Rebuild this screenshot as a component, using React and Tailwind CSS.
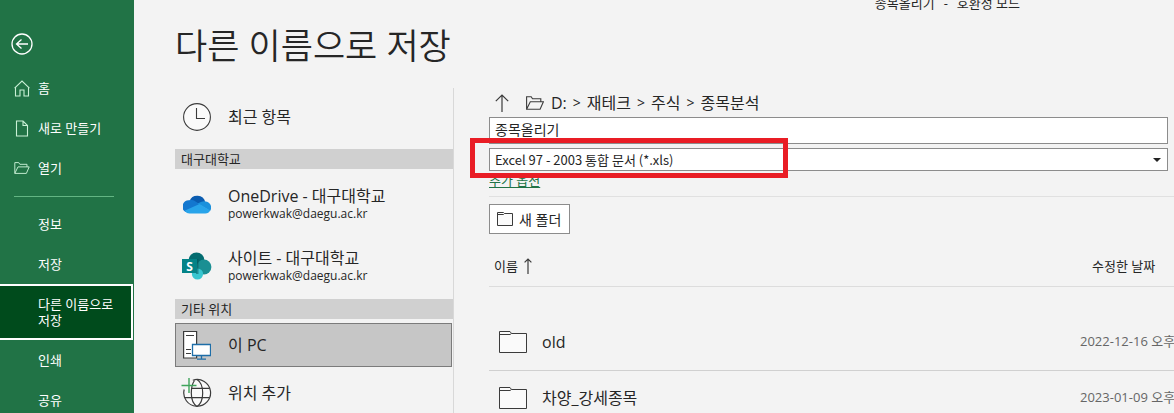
import React from "react";

const BackIcon = () => (
  <svg width="22" height="22" viewBox="0 0 22 22" fill="none" stroke="#fff" strokeWidth="1.3">
    <circle cx="11" cy="11" r="10" />
    <path d="M17 11H5.500M10.500 6.500l-5 4.500 5 4.500" />
  </svg>
);

const HomeIcon = () => (
  <svg width="16" height="17" viewBox="0 0 16 17" fill="none" stroke="#c9f0d6" strokeWidth="1.1">
    <path d="M.6 8.2 8 1l7.400 7.200M1.500 7.500v8.500h4.500v-6h4v6h4.500V7.500" />
  </svg>
);

const NewIcon = () => (
  <svg width="16" height="17" viewBox="0 0 16 17" fill="none" stroke="#c9f0d6" strokeWidth="1.1">
    <path d="M2.500 1h6.500l4.500 4.500V16h-11zM9 1v4.500h4.500" />
  </svg>
);

const OpenIcon = ({ className, width = 16, height = 12 }) => (
  <svg className={className} width={width} height={height} viewBox="0 0 18 14" fill="none" stroke="currentColor" strokeWidth="1.1">
    <path d="M.6 13.300V.7h4.600l1.300 2h8.300v3M.6 13.300l3.700-7.600h13.100l-3.300 7.600z" />
  </svg>
);

const ClockIcon = () => (
  <svg width="28" height="28" viewBox="0 0 28 28" fill="#fafafa" stroke="#3b3b3b" strokeWidth="1.1">
    <circle cx="14" cy="14" r="13.400" />
    <path d="M13.500 5v10.500H22" fill="none" />
  </svg>
);

const OneDriveIcon = () => (
  <svg width="28" height="20" viewBox="0 0 28 20">
    <path d="M6.500 7A8.300 8.300 0 0 1 22.300 8L15 14z" fill="#0a5cb0" />
    <path d="M6.500 6.200c2.300-.3 4.300.2 6 1.300l6 3.700L2.500 18A6.400 6.400 0 0 1 6.500 6.200z" fill="#1377cf" />
    <path d="M14.500 9.500 18.500 7.800c1.200-.5 2.600-.7 3.900-.4A6.100 6.100 0 0 1 27 17z" fill="#1a90dc" />
    <path d="M1.500 16.700 16.500 10l10.700 6.500A5.500 5.500 0 0 1 22 19.500H6.500a6.500 6.500 0 0 1-5-2.800z" fill="#28a4ea" />
  </svg>
);

const SharePointIcon = () => (
  <svg className="-ml-px" width="30" height="28" viewBox="0 0 30 28">
    <circle cx="14.500" cy="8.500" r="8" fill="#036c70" />
    <circle cx="22" cy="15" r="7.400" fill="#1a8f93" />
    <circle cx="15.500" cy="22" r="5.600" fill="#37c6d0" />
    <path d="M14 7h2.500v15H14z" fill="#035055" opacity=".5" />
    <rect y="7" width="15" height="14" fill="#038387" />
    <text x="7.500" y="18.500" textAnchor="middle" fontSize="12" fontWeight="700" fill="#fff">S</text>
  </svg>
);

const PcIcon = () => (
  <svg width="28" height="30" viewBox="0 0 28 30" fill="#fff">
    <path d="M.6 1.500h13V28H.6z" stroke="#3b3b3b" strokeWidth="1.200" />
    <path d="M3 5.500h8M3 19.500h5M3 23.500h5" stroke="#3b3b3b" strokeWidth="1.200" />
    <path d="M9.500 14.500h18v11h-18z" stroke="#1e6ea8" strokeWidth="1.300" />
    <path d="M18.500 25.500v3.500M14 29.200h9" stroke="#1e6ea8" strokeWidth="1.300" />
  </svg>
);

const AddPlaceIcon = () => (
  <svg className="-ml-0.5" width="31" height="30" viewBox="0 0 31 30" fill="none" stroke="#3b3b3b" strokeWidth="1.200">
    <path d="M11.800 2.200A13.400 13.400 0 1 1 3.200 11.500L8 9z" fill="#fafafa" stroke="none" />
    <path d="M11.800 2.200A13.400 13.400 0 1 1 3.200 11.500" />
    <path d="M13.500 2.500C11.300 5.500 10.300 10 10.300 15c0 5.500 1.800 11 5.700 13.400 3.900-2.400 5.700-7.900 5.700-13.400S19.900 4 16 1.600M11 10.300h17.500M3.500 19.700h25" />
    <path d="M8 0v15M.5 7.500h15" stroke="#3fa45b" strokeWidth="1.400" />
  </svg>
);

const UpArrow = ({ width, height }) => (
  <svg width={width} height={height} viewBox="0 0 14 18" fill="none" stroke="#3b3b3b" strokeWidth="1.200">
    <path d="M7 18V1M.8 7.200 7 1l6.200 6.200" />
  </svg>
);

const SortArrow = () => (
  <svg width="8" height="16" viewBox="0 0 8 16" fill="none" stroke="#3b3b3b" strokeWidth="1.200">
    <path d="M4 16V1M.6 4.400 4 1l3.400 3.400" />
  </svg>
);

const FolderIcon = () => (
  <svg width="28" height="22" viewBox="0 0 28 22" fill="#fafafa" stroke="#3b3b3b">
    <path d="M.5 .5h10.500l1.500 2h15v19H.5z" />
    <path d="M.5 3.500h10.500l1.500-1" />
  </svg>
);

const SmallFolderIcon = () => (
  <svg width="16" height="14" viewBox="0 0 16 14" fill="#fafafa" stroke="#3b3b3b">
    <path d="M.5 .5h6l1 1h8v12H.5z" />
    <path d="M.5 2.500h6l1-1" />
  </svg>
);

const topNav = [
  { label: "홈", icon: <HomeIcon /> },
  { label: "새로 만들기", icon: <NewIcon /> },
  { label: "열기", icon: <OpenIcon className="text-[#c9f0d6]" /> },
];

const fileNav = [
  { label: "정보" },
  { label: "저장" },
  { label: "다른 이름으로 저장", selected: true },
  { label: "인쇄" },
  { label: "공유" },
];

const crumbs = ["D:", "재테크", "주식", "종목분석"];

const folders = [
  { name: "old", date: "2022-12-16 오후" },
  { name: "차양_강세종목", date: "2023-01-09 오후" },
];

function Sidebar() {
  return (
    <nav className="w-[134px] shrink-0 bg-[#217346] pt-[33px] text-[13px] leading-4 text-white">
      <button aria-label="뒤로" className="mb-[13px] ml-[11px] block">
        <BackIcon />
      </button>
      {topNav.map((item) => (
        <button key={item.label} className="flex h-10 w-full items-center gap-2 pl-3.5 text-left">
          {item.icon}
          {item.label}
        </button>
      ))}
      <hr className="mt-2 mr-5 mb-[7px] ml-3.5 h-px border-0 bg-[#63b583]" />
      {fileNav.map((item) =>
        item.selected ? (
          <button key={item.label} aria-current="page" className="block h-14 w-[133px] border-2 border-l-0 border-white bg-[#004b1c] pr-4 pl-[38px] text-left break-keep">
            {item.label}
          </button>
        ) : (
          <button key={item.label} className="block h-10 w-full pl-[38px] text-left">
            {item.label}
          </button>
        )
      )}
    </nav>
  );
}

function Place({ icon, title, detail, className }) {
  return (
    <button className={"flex w-full items-center text-left " + className}>
      <span className="flex w-[45px] shrink-0 items-center">{icon}</span>
      <span>
        <span className="block text-base leading-5">{title}</span>
        {detail && <span className="block text-[12px] leading-4">{detail}</span>}
      </span>
    </button>
  );
}

function Places() {
  return (
    <section className="w-[279px] shrink-0 border-r border-[#d8d8d8]">
      <Place className="h-[57px] pl-2" icon={<ClockIcon />} title="최근 항목" />
      <h2 className="mt-1 h-5 bg-[#d0d0d0] pl-1.5 text-[13px] leading-5">대구대학교</h2>
      <Place className="mt-1 h-[62px] pl-2" icon={<OneDriveIcon />} title="OneDrive - 대구대학교" detail="powerkwak@daegu.ac.kr" />
      <Place className="h-[62px] pl-2" icon={<SharePointIcon />} title="사이트 - 대구대학교" detail="powerkwak@daegu.ac.kr" />
      <h2 className="mt-0.5 h-5 bg-[#d0d0d0] pl-1.5 text-[13px] leading-5">기타 위치</h2>
      <div className="mt-1 pr-px">
        <Place className="h-11 border border-[#7b7b7b] bg-[#c6c6c6] pl-[7px]" icon={<PcIcon />} title="이 PC" />
      </div>
      <Place className="mt-1 h-11 pl-2" icon={<AddPlaceIcon />} title="위치 추가" />
    </section>
  );
}

function SaveForm() {
  return (
    <section className="min-w-0 flex-1 pl-[35px]">
      <div className="flex h-[29px] items-center text-base leading-5">
        <button aria-label="상위 폴더" className="mr-[17px] ml-1.5">
          <UpArrow width={14} height={18} />
        </button>
        <OpenIcon className="mr-[7px] text-[#3b3b3b]" width={18} height={14} />
        <div className="flex gap-1.5">
          {crumbs.map((crumb, i) => (
            <React.Fragment key={crumb}>
              {i > 0 && <span className="text-[14px]">&gt;</span>}
              <span>{crumb}</span>
            </React.Fragment>
          ))}
        </div>
      </div>
      <div className="relative mr-[6px]">
        <input aria-label="파일 이름" defaultValue="종목올리기" className="block h-[27px] w-full border border-[#8c8c8c] bg-white px-[5px] pb-[3px] text-[14px] outline-none" />
        <div className="relative mt-1">
          <select aria-label="파일 형식" className="block h-[23px] w-full appearance-none border border-[#8c8c8c] bg-white px-[5px] font-['Noto_Sans_CJK_KR',sans-serif] text-[13px] outline-none">
            <option>Excel 97 - 2003 통합 문서 (*.xls)</option>
          </select>
          <svg className="pointer-events-none absolute top-[10px] right-[7px]" width="8" height="4" viewBox="0 0 8 4">
            <path d="M0 0h8L4 4z" fill="#222" />
          </svg>
        </div>
        <div className="pointer-events-none absolute top-[21px] left-[-19px] h-[40px] w-[318px] border-5 border-[#e91d25]" />
      </div>
      <a href="#options" className="mt-px block w-fit text-[13px] leading-4 text-[#217346] underline underline-offset-2">
        추가 옵션
      </a>
      <hr className="mt-2 border-[#e0e0e0]" />
      <button className="mt-[7px] flex h-[30px] items-center gap-1.5 border border-[#8c8c8c] bg-white px-[7px] pr-2 text-[14px]">
        <SmallFolderIcon />새 폴더
      </button>
      <table className="mt-[13px] w-full table-fixed border-collapse">
        <thead>
          <tr className="h-[39px] border-b border-[#dcdcdc] text-[13px] leading-4">
            <th className="pl-[5px] text-left font-normal">
              <button className="flex items-center gap-1.5">
                이름 <SortArrow />
              </button>
            </th>
            <th className="w-[94px] pl-3 text-left font-normal whitespace-nowrap">수정한 날짜</th>
          </tr>
        </thead>
        <tbody>
          <tr className="h-7" aria-hidden="true">
            <td colSpan={2} />
          </tr>
          {folders.map((f) => (
            <tr key={f.name} className="h-14 border-b border-[#d0d0d0]">
              <td className="pl-2.5">
                <div className="flex items-center gap-[15px] text-base leading-5">
                  <FolderIcon />
                  {f.name}
                </div>
              </td>
              <td className="text-[13px] whitespace-nowrap text-[#666]">{f.date}</td>
            </tr>
          ))}
        </tbody>
      </table>
    </section>
  );
}

export default function App() {
  return (
    <div className="flex h-screen overflow-hidden bg-[#f3f3f3] font-['Open_Sans','Noto_Sans_CJK_KR',sans-serif] text-[#262626]">
      <Sidebar />
      <main className="flex min-w-0 flex-1 flex-col pl-[41px]">
        <header className="h-[88px] shrink-0">
          <p className="-mt-[7px] mr-[154px] flex h-5 justify-end gap-[9px] text-[13px] leading-5">
            <span>종목올리기</span>
            <span>-</span>
            <span>호환성 모드</span>
          </p>
          <h1 className="mt-2.5 text-[35px] leading-[46px] font-[350]">다른 이름으로 저장</h1>
        </header>
        <div className="flex flex-1">
          <Places />
          <SaveForm />
        </div>
      </main>
    </div>
  );
}
